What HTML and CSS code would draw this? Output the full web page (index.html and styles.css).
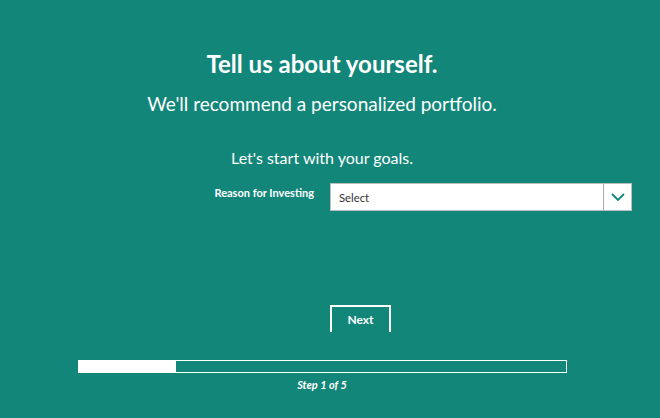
FILE: index.html
```html
<!DOCTYPE html>
<html lang="en">
<head>
  <meta charset="UTF-8">
  <meta name="viewport" content="width=device-width, initial-scale=1">
  <title>Tell us about yourself</title>
  <link rel="stylesheet" href="styles.css">
</head>
<body>

<main class="wizard">
  <header class="intro">
    <h1>Tell us about yourself.</h1>
    <p class="sub">We'll recommend a personalized portfolio.</p>
    <p class="lead">Let's start with your goals.</p>
  </header>

  <form class="campos">
    <label class="etiqueta" for="reason">Reason for Investing</label>
    <div class="selector">
      <span class="valor">Select</span>
      <span class="flecha">
        <svg width="14" height="8" viewBox="0 0 14 8"><path d="M1 1 L7 7 L13 1" fill="none" stroke="#13867a" stroke-width="1.8"/></svg>
      </span>
    </div>

    <button type="button" class="siguiente">Next</button>
  </form>

  <div class="progreso">
    <div class="barra"><div class="relleno" style="width: 20%"></div></div>
    <p class="paso">Step 1 of 5</p>
  </div>
</main>

</body>
</html>
```

FILE: styles.css
```css
body {
  margin: 0;
  font-family: 'Lato', 'Open Sans', sans-serif;
  background-color: #13867a;
  color: white;
}

.wizard {
  width: 644px;
  padding-top: 47px;
}

.intro {
  text-align: center;
}

h1 {
  margin: 0;
  font-size: 24px;
  font-weight: 700;
  line-height: 34px;
}

.sub {
  margin: 10px 0 0;
  font-size: 19px;
  font-weight: 400;
  line-height: 26px;
}

.lead {
  margin: 30px 0 0;
  font-size: 16px;
  font-weight: 400;
  line-height: 22px;
}

.campos {
  display: grid;
  grid-template-columns: 154px 302px;
  column-gap: 16px;
  margin: 14px 0 0 160px;
}

.etiqueta {
  text-align: right;
  font-size: 11px;
  font-weight: 700;
  padding-top: 3px;
}

.selector {
  display: flex;
  height: 26px;
  background: white;
  border: 1px solid #bdbdbd;
}

.valor {
  flex: 1;
  color: #333;
  font-size: 11.3px;
  padding: 7px 8px 0;
}

.flecha {
  width: 27px;
  border-left: 1px solid #a9a9a9;
  display: flex;
  align-items: center;
  justify-content: center;
}

.siguiente {
  grid-column: 2;
  justify-self: start;
  margin-top: 94px;
  width: 61px;
  height: 27px;
  background: none;
  border: 2px solid white;
  border-bottom: none;
  color: white;
  font-family: inherit;
  font-size: 12px;
  font-weight: 700;
  padding: 0;
  cursor: pointer;
}

.progreso {
  margin-top: 28px;
  display: flex;
  flex-direction: column;
  align-items: center;
}

.barra {
  width: 487px;
  height: 11px;
  border: 1px solid white;
}

.relleno {
  height: 100%;
  background: white;
}

.paso {
  margin: 5px 0 0;
  font-size: 11px;
  font-weight: 700;
  font-style: italic;
}
```
